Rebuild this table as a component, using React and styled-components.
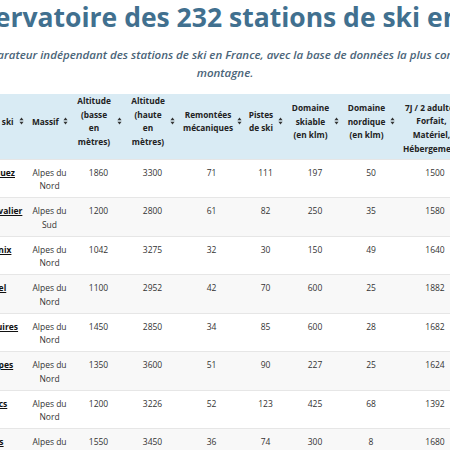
import styled, { createGlobalStyle } from 'styled-components';

const GlobalStyle = createGlobalStyle`
  html, body {
    margin: 0;
    padding: 0;
    overflow: hidden;
    background: #fff;
    font-family: 'Open Sans', 'Noto Sans', sans-serif;
  }
`;

const columns = [
  { key: 'name', label: ['Station de ski'], width: 76 },
  { key: 'massif', label: ['Massif'], width: 43 },
  { key: 'low', label: ['Altitude', '(basse', 'en', 'mètres)'], width: 55 },
  { key: 'high', label: ['Altitude', '(haute', 'en', 'mètres)'], width: 53 },
  { key: 'lifts', label: ['Remontées', 'mécaniques'], width: 65 },
  { key: 'runs', label: ['Pistes', 'de ski'], width: 43 },
  { key: 'alpine', label: ['Domaine', 'skiable', '(en klm)'], width: 56 },
  { key: 'nordic', label: ['Domaine', 'nordique', '(en klm)'], width: 56 },
  { key: 'price', label: ['7J / 2 adultes', 'Forfait,', 'Matériel,', 'Hébergement'], width: 72, low: true },
  { key: 'note', label: ['Note'], width: 27 },
];

const stations = [
  { name: "Alpe d'Huez", massif: 'Nord', low: 1860, high: 3300, lifts: 71, runs: 111, alpine: 197, nordic: 50, price: 1500, note: '4,6' },
  { name: 'Serre Chevalier', massif: 'Sud', low: 1200, high: 2800, lifts: 61, runs: 82, alpine: 250, nordic: 35, price: 1580, note: '4,4' },
  { name: 'Chamonix', massif: 'Nord', low: 1042, high: 3275, lifts: 32, runs: 30, alpine: 150, nordic: 49, price: 1640, note: '4,5' },
  { name: 'Méribel', massif: 'Nord', low: 1100, high: 2952, lifts: 42, runs: 70, alpine: 600, nordic: 25, price: 1882, note: '4,7' },
  { name: 'Les Menuires', massif: 'Nord', low: 1450, high: 2850, lifts: 34, runs: 85, alpine: 600, nordic: 28, price: 1682, note: '4,3' },
  { name: 'Les 2 Alpes', massif: 'Nord', low: 1350, high: 3600, lifts: 51, runs: 90, alpine: 227, nordic: 25, price: 1624, note: '4,4' },
  { name: 'Les Arcs', massif: 'Nord', low: 1200, high: 3226, lifts: 52, runs: 123, alpine: 425, nordic: 68, price: 1392, note: '4,5' },
  { name: 'Tignes', massif: 'Nord', low: 1550, high: 3450, lifts: 36, runs: 74, alpine: 300, nordic: 8, price: 1680, note: '4,6' },
];

function SortIcon() {
  return (
    <SortSvg viewBox="0 0 6 10" aria-hidden="true">
      <polygon points="3,0.5 5.6,4 0.4,4" />
      <polygon points="0.4,6 5.6,6 3,9.5" />
    </SortSvg>
  );
}

export default function App() {
  return (
    <>
      <GlobalStyle />
      <Page>
        <Title>Observatoire des 232 stations de ski en France</Title>
        <Subtitle>
          Comparateur indépendant des stations de ski en France, avec la base de données la plus complète
          <br />
          montagne.
        </Subtitle>
        <Table>
          <colgroup>
            {columns.map((c) => (
              <col key={c.key} style={{ width: c.width }} />
            ))}
          </colgroup>
          <thead>
            <tr>
              {columns.map((c) => (
                <HeadCell key={c.key} $low={c.low}>
                  <HeadInner>
                    <Label>
                      {c.label.map((line) => (
                        <span key={line}>{line}</span>
                      ))}
                    </Label>
                    <SortIcon />
                  </HeadInner>
                </HeadCell>
              ))}
            </tr>
          </thead>
          <tbody>
            {stations.map((s) => (
              <Row key={s.name}>
                <Cell>
                  <StationLink href="#">{s.name}</StationLink>
                </Cell>
                <Cell>
                  Alpes du
                  <br />
                  {s.massif}
                </Cell>
                <Cell>{s.low}</Cell>
                <Cell>{s.high}</Cell>
                <Cell>{s.lifts}</Cell>
                <Cell>{s.runs}</Cell>
                <Cell>{s.alpine}</Cell>
                <Cell>{s.nordic}</Cell>
                <Cell>{s.price}</Cell>
                <Cell>{s.note}</Cell>
              </Row>
            ))}
          </tbody>
        </Table>
      </Page>
    </>
  );
}

const Page = styled.div`
  width: 450px;
  display: flex;
  flex-direction: column;
  align-items: center;
`;

const Title = styled.h1`
  margin: 0;
  padding: 2px 0 0 50px;
  white-space: nowrap;
  font-size: 26.5px;
  line-height: 31px;
  font-weight: 700;
  color: #41708f;
`;

const Subtitle = styled.p`
  margin: 12.5px 0 0;
  white-space: nowrap;
  text-align: center;
  font-size: 11.5px;
  line-height: 18px;
  font-style: italic;
  font-weight: 600;
  color: #4a6478;
`;

const Table = styled.table`
  margin-top: 12.5px;
  flex-shrink: 0;
  border-collapse: collapse;
  table-layout: fixed;
  width: 546px;
  font-size: 8.5px;
  color: #333;
`;

const HeadCell = styled.th`
  background: #d9ebf4;
  padding: ${(p) => (p.$low ? '6.5px 4px 3.5px' : '0 4px 10px')};
  line-height: 13.7px;
  font-size: 8.3px;
  font-weight: 700;
  color: #222;
  vertical-align: middle;
`;

const HeadInner = styled.div`
  display: flex;
  align-items: center;
  gap: 4px;
`;

const Label = styled.div`
  flex: 1;
  display: flex;
  flex-direction: column;
  align-items: center;
  white-space: nowrap;
`;

const SortSvg = styled.svg`
  flex-shrink: 0;
  width: 5px;
  height: 8px;
  fill: #333;
`;

const Row = styled.tr`
  border-top: 1px solid #e6e6e6;

  &:nth-child(even) {
    background: #f8f8f8;
  }
`;

const Cell = styled.td`
  padding: 6px 4px 5px;
  line-height: 13.25px;
  text-align: center;
  vertical-align: top;
`;

const StationLink = styled.a`
  color: #111;
  font-weight: 700;
  text-decoration: underline;
  white-space: nowrap;
`;
